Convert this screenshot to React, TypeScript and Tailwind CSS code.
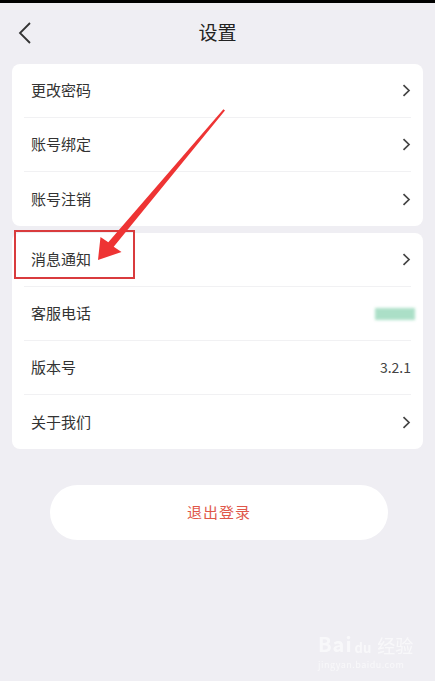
const groups = [
  [
    { label: "更改密码", arrow: true },
    { label: "账号绑定", arrow: true },
    { label: "账号注销", arrow: true },
  ],
  [
    { label: "消息通知", arrow: true },
    { label: "客服电话", phone: true },
    { label: "版本号", value: "3.2.1" },
    { label: "关于我们", arrow: true },
  ],
];

type Item = { label: string; arrow?: boolean; phone?: boolean; value?: string };

function Chevron() {
  return (
    <svg width="9" height="13" viewBox="0 0 9 13">
      <path d="M1.5 1.2 L7 6.5 L1.5 11.8" fill="none" stroke="#444" strokeWidth="1.7" />
    </svg>
  );
}

function Row({ item, last }: { item: Item; last: boolean }) {
  return (
    <div
      className={
        "mx-3 h-[54px] flex items-center justify-between pl-[7px] " +
        (last ? "" : "border-b border-[#f1f1f3]")
      }
    >
      <span className="text-[15px] text-[#333]">{item.label}</span>
      {item.arrow && <Chevron />}
      {item.value && <span className="text-[14px] text-[#444]">{item.value}</span>}
      {item.phone && (
        <div className="w-[40px] h-[12px] mr-[-4px] bg-[#a3dcc2] blur-[1.5px] opacity-90" />
      )}
    </div>
  );
}

export default function App() {
  return (
    <div
      className="relative w-[435px] h-[681px] bg-[#efeef3] overflow-hidden"
      style={{ fontFamily: '"Noto Sans CJK SC", "Noto Sans", sans-serif' }}
    >
      <div className="h-[3px] bg-black" />

      {/* Header */}
      <div className="h-[61px] grid grid-cols-[1fr_auto_1fr] items-center px-4">
        <svg width="16" height="24" viewBox="0 0 16 24" className="ml-[1px] -mt-[2px]">
          <path d="M13 2 L3 12 L13 22" fill="none" stroke="#333" strokeWidth="1.8" />
        </svg>
        <h1 className="text-[19px] text-[#222] -mt-[3px]">设置</h1>
        <div />
      </div>

      {/* Groups */}
      <div className="flex flex-col gap-[7px]">
        {groups.map((g, gi) => (
          <div key={gi} className="mx-3 bg-white rounded-lg">
            {g.map((item, i) => (
              <Row key={item.label} item={item} last={i === g.length - 1} />
            ))}
          </div>
        ))}
      </div>

      {/* Logout */}
      <button className="mt-[36px] ml-[50px] w-[338px] h-[55px] rounded-full bg-white flex items-center justify-center">
        <span className="text-[15px] text-[#e0574a] tracking-[1px]">退出登录</span>
      </button>

      {/* Annotation overlay */}
      <div className="absolute left-[14px] top-[230px] w-[121px] h-[49px] border-2 border-[#d93b3d]" />
      <svg className="absolute left-0 top-0" width="435" height="681">
        <polygon
          points="225,110.5 113.7,246.7 121.5,252 98,260 100.5,237 108.3,242.3 223.4,109.3"
          fill="#ee3434"
        />
      </svg>

      {/* Watermark */}
      <div className="absolute left-[318px] top-[634px] text-white opacity-60">
        <div className="flex items-end gap-[2px] leading-none">
          <span className="text-[20px] font-bold tracking-[1px]">Bai</span>
          <span className="text-[13px] font-bold">du</span>
          <span className="text-[18px] ml-[4px]">经验</span>
        </div>
        <div className="text-[9px] mt-[4px] tracking-[0.5px]">jingyan.baidu.com</div>
      </div>
    </div>
  );
}
